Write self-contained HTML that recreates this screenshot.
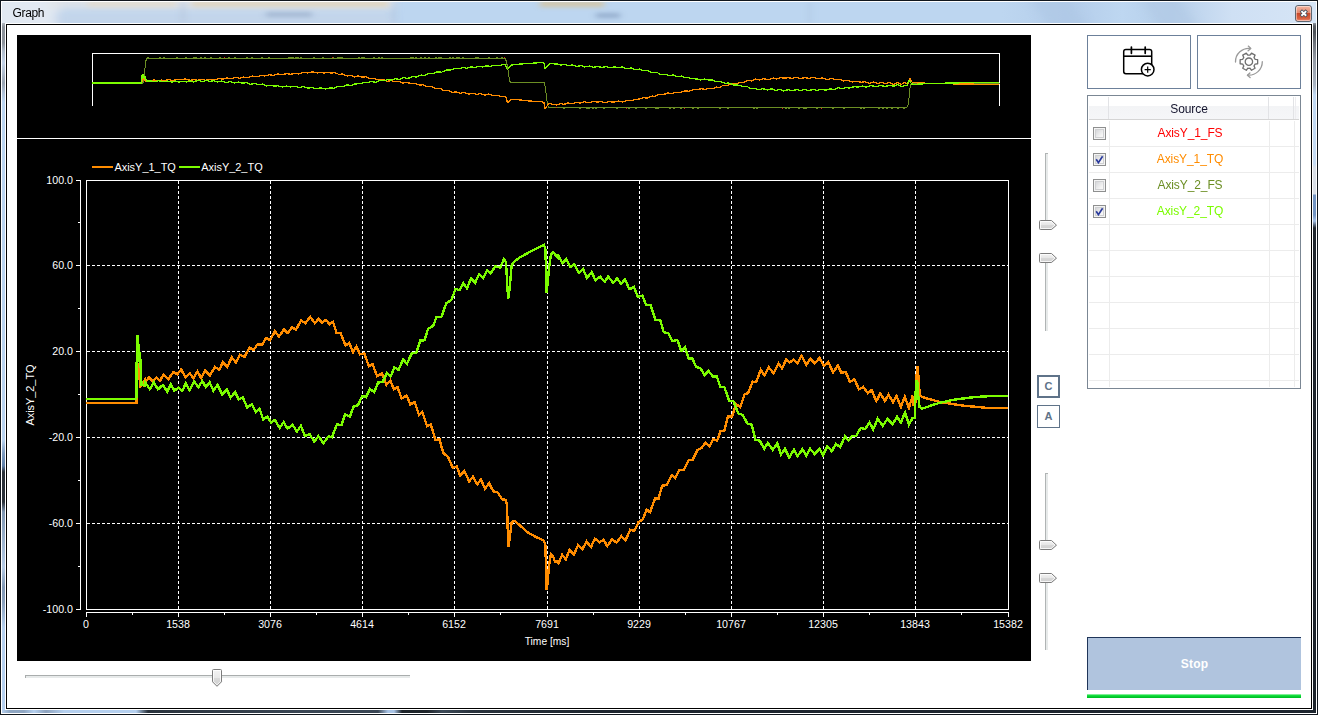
<!DOCTYPE html>
<html><head><meta charset="utf-8"><title>Graph</title>
<style>
html,body{margin:0;padding:0;}
body{width:1318px;height:715px;overflow:hidden;position:relative;background:#fff;font-family:"Liberation Sans",Arial,sans-serif;}
.abs{position:absolute;}
#frame{left:0;top:0;width:1318px;height:715px;background:#10161d;}
#titlebar{left:2px;top:2px;width:1314px;height:21px;
 background:
  linear-gradient(to right, #bdd6f0 0px, #bdd6f0 1000px, #b4cdea 1070px, #bed7f1 1120px, #b6cfea 1170px, #cfe0f4 1230px, #d6e5f6 1314px);}
#title{left:12.5px;top:4px;font-size:12px;line-height:18px;color:#000;letter-spacing:-0.35px;}
#client{left:7px;top:25px;width:1304px;height:683px;background:#fff;}
.btn{border:1px solid #6c809a;background:#fff;box-sizing:border-box;}
#grid{left:1087px;top:95px;width:214px;height:294px;border:1px solid #7b8794;box-sizing:border-box;background:#fff;}
.row{position:absolute;left:1px;width:210px;height:1px;background:#ececec;}
.col{position:absolute;top:25px;width:1px;height:266px;background:#ececec;}
.hsep{position:absolute;top:1px;width:1px;height:22px;background:#e2e3e6;}
.cb{position:absolute;left:5px;width:13px;height:13px;box-sizing:border-box;border:1px solid #8e8f8f;background:#f4f4f4;}
.cb i{position:absolute;left:1px;top:1px;width:9px;height:9px;box-sizing:border-box;border:1px solid #cfd0d2;background:linear-gradient(135deg,#d6d7da 0%,#f6f6f6 80%);}
.cell{position:absolute;left:22px;width:160px;text-align:center;font-size:12px;line-height:14px;height:14px;letter-spacing:-0.1px;}
.tv{position:absolute;width:3px;box-sizing:border-box;background:#e7eaea;border-left:1px solid #b0b4b4;border-top:1px solid #b0b4b4;}
</style></head>
<body>
<div id="frame" class="abs"></div>
<!-- glass borders -->
<div class="abs" style="left:1px;top:1px;width:1316px;height:713px;background:#fff;"></div>
<div class="abs" style="left:2px;top:2px;width:1314px;height:711px;background:#a9c3e0;"></div>
<div class="abs" id="leftglass" style="left:2px;top:2px;width:3px;height:711px;background:linear-gradient(to bottom,#dfe6ee 0,#d5dce5 17px,#8d939b 25px,#8d939b 41px,#b0bccb 49px,#c3d3e8 61px,#b0bdce 71px,#9aa5b3 81px,#b0c2d8 91px,#bcd6f2 100px,#b9d3f0 438px,#7f9cc0 451px,#5f7fa8 464px,#2a3038 470px,#2a3038 500px,#8097b3 510px,#9db4cf 540px,#b5cbe6 565px,#8299b6 585px,#8aa0bc 600px,#b5d0ef 625px,#b5d0ef 711px);"></div>
<div class="abs" id="rightglass" style="left:1313px;top:2px;width:3px;height:711px;background:linear-gradient(to bottom,#d6e5f6 0,#d0dff0 17px,#5a5f66 24px,#4d5258 30px,#70767e 42px,#949ba5 58px,#a9b4c2 83px,#c0d8f2 93px,#c5dbf3 162px,#d8dee6 166px,#d8dee6 192px,#7294c2 193px,#7294c2 213px,#a4c0e6 219px,#1f262e 226px,#1c232b 711px);"></div>
<div class="abs" id="bottomglass" style="left:2px;top:710px;width:1314px;height:3px;background:linear-gradient(to right,#b5d0ef 0,#8fa6c2 8px,#8fa6c2 22px,#b5d0ef 32px,#8da2bd 44px,#b5d0ef 62px,#b5d0ef 134px,#2a333d 146px,#3a4654 300px,#3a4654 376px,#a9c4e6 386px,#a9c4e6 392px,#1e242a 400px,#1e242a 425px,#3d4a58 440px,#2a333d 470px,#1d252e 600px,#1d252e 1314px);"></div>
<div id="titlebar" class="abs"></div>
<svg class="abs" style="left:2px;top:2px" width="1314" height="21" viewBox="2 2 1314 21">
<defs><filter id="bl" x="-20%" y="-200%" width="140%" height="500%"><feGaussianBlur stdDeviation="3 2"/></filter>
<filter id="bl2" x="-20%" y="-200%" width="140%" height="500%"><feGaussianBlur stdDeviation="5 3"/></filter></defs>
<g filter="url(#bl2)">
<rect x="-10" y="-4" width="70" height="34" fill="#e6ebf2" opacity=".9"/>
<rect x="50" y="-4" width="345" height="13" fill="#e2e4e8" opacity=".85"/>
<rect x="55" y="12" width="340" height="14" fill="#c4d5ea" opacity=".9"/>
<rect x="1040" y="-4" width="40" height="34" fill="#adc6e4" opacity=".6" transform="skewX(35) translate(-10,0)"/>
<rect x="1150" y="-4" width="40" height="34" fill="#b0c8e4" opacity=".5" transform="skewX(35) translate(-10,0)"/>
</g>
<g filter="url(#bl)">
<rect x="88" y="1" width="88" height="6" fill="#ead9bd" opacity=".55"/>
<rect x="192" y="1" width="196" height="6" fill="#e3cfa8" opacity=".6"/>
<rect x="540" y="1" width="64" height="6" fill="#dcc08c" opacity=".7"/>
<rect x="266" y="12" width="46" height="5" fill="#9db2cd" opacity=".8"/>
<rect x="596" y="13" width="24" height="5" fill="#8fa8c8" opacity=".85"/>
<rect x="182" y="2" width="2" height="21" fill="#aebfd6" opacity=".9"/>
<rect x="393" y="2" width="2" height="21" fill="#a9bfdb" opacity=".9"/>
<rect x="808" y="2" width="3" height="21" fill="#aec6e3" opacity=".8"/>
</g>
</svg>
<div id="title" class="abs">Graph</div>
<!-- close button -->
<svg class="abs" style="left:1294px;top:4px" width="19" height="19" viewBox="0 0 19 19">
<defs><linearGradient id="cg" x1="0" y1="0" x2="0" y2="1"><stop offset="0" stop-color="#f3b8a4"/><stop offset=".45" stop-color="#e48a70"/><stop offset=".5" stop-color="#c8492a"/><stop offset=".8" stop-color="#d9603f"/><stop offset="1" stop-color="#f0917a"/></linearGradient></defs>
<rect x="1.5" y="1.5" width="16" height="16" rx="2.5" fill="url(#cg)" stroke="#5d6670" stroke-width="1"/>
<rect x="2.5" y="2.5" width="14" height="14" rx="1.5" fill="none" stroke="#fff" stroke-opacity=".45"/>
<path d="M6.8 6.6L12.8 12.2M12.8 6.6L6.8 12.2" stroke="#46505e" stroke-width="3.4"/>
<path d="M7.4 7.1L12.2 11.7M12.2 7.1L7.4 11.7" stroke="#fff" stroke-width="1.9"/>
</svg>
<!-- client -->
<div class="abs" style="left:5px;top:23px;width:1308px;height:687px;background:#fff;"></div>
<div class="abs" style="left:6px;top:24px;width:1306px;height:685px;background:#000;"></div>
<div id="client" class="abs"></div>
<svg id="chart" width="1318" height="715" viewBox="0 0 1318 715" style="position:absolute;left:0;top:0">
<rect x="17" y="35" width="1014" height="626" fill="#000"/>
<g fill="#fff" shape-rendering="crispEdges">
<rect x="92" y="53" width="908" height="1"/><rect x="92" y="53" width="1" height="53"/><rect x="999" y="53" width="1" height="53"/>
<rect x="17" y="138" width="1014" height="1"/>
<rect x="86" y="180" width="923" height="1"/><rect x="86" y="609" width="923" height="1"/><rect x="86" y="180" width="1" height="430"/><rect x="1008" y="180" width="1" height="430"/>
<rect x="80" y="180" width="1" height="430"/><rect x="86" y="612" width="923" height="1"/>
<rect x="76" y="180" width="4" height="1"/>
<rect x="78" y="222" width="2" height="1"/>
<rect x="76" y="265" width="4" height="1"/>
<rect x="78" y="308" width="2" height="1"/>
<rect x="76" y="351" width="4" height="1"/>
<rect x="78" y="394" width="2" height="1"/>
<rect x="76" y="437" width="4" height="1"/>
<rect x="78" y="480" width="2" height="1"/>
<rect x="76" y="523" width="4" height="1"/>
<rect x="78" y="566" width="2" height="1"/>
<rect x="76" y="609" width="4" height="1"/>
<rect x="86" y="613" width="1" height="4"/>
<rect x="132" y="613" width="1" height="2"/>
<rect x="178" y="613" width="1" height="4"/>
<rect x="224" y="613" width="1" height="2"/>
<rect x="270" y="613" width="1" height="4"/>
<rect x="316" y="613" width="1" height="2"/>
<rect x="362" y="613" width="1" height="4"/>
<rect x="408" y="613" width="1" height="2"/>
<rect x="454" y="613" width="1" height="4"/>
<rect x="500" y="613" width="1" height="2"/>
<rect x="547" y="613" width="1" height="4"/>
<rect x="593" y="613" width="1" height="2"/>
<rect x="639" y="613" width="1" height="4"/>
<rect x="685" y="613" width="1" height="2"/>
<rect x="731" y="613" width="1" height="4"/>
<rect x="777" y="613" width="1" height="2"/>
<rect x="823" y="613" width="1" height="4"/>
<rect x="869" y="613" width="1" height="2"/>
<rect x="915" y="613" width="1" height="4"/>
<rect x="961" y="613" width="1" height="2"/>
<rect x="1008" y="613" width="1" height="4"/>
</g>
<g stroke="#fff" stroke-width="1" stroke-dasharray="3 2" shape-rendering="crispEdges">
<line x1="178.5" y1="181" x2="178.5" y2="609"/>
<line x1="270.5" y1="181" x2="270.5" y2="609"/>
<line x1="362.5" y1="181" x2="362.5" y2="609"/>
<line x1="454.5" y1="181" x2="454.5" y2="609"/>
<line x1="547.5" y1="181" x2="547.5" y2="609"/>
<line x1="639.5" y1="181" x2="639.5" y2="609"/>
<line x1="731.5" y1="181" x2="731.5" y2="609"/>
<line x1="823.5" y1="181" x2="823.5" y2="609"/>
<line x1="915.5" y1="181" x2="915.5" y2="609"/>
<line x1="87" y1="265.5" x2="1008" y2="265.5"/>
<line x1="87" y1="351.5" x2="1008" y2="351.5"/>
<line x1="87" y1="437.5" x2="1008" y2="437.5"/>
<line x1="87" y1="523.5" x2="1008" y2="523.5"/>
</g>
<g fill="none" stroke-width="1.3" stroke-linejoin="round" shape-rendering="crispEdges">
<polyline stroke="#6b8e23" stroke-width="1" points="92.5,83.5 142.5,83.5 144.0,80.5 145.5,62.5 146.5,58.5 147.5,58.5 147.5,57.5 148.5,57.5 148.5,58.5 159.5,58.5 159.5,57.5 160.5,57.5 160.5,58.5 163.5,58.5 163.5,57.5 164.5,57.5 164.5,58.5 176.5,58.5 176.5,57.5 177.5,57.5 177.5,58.5 185.5,58.5 185.5,57.5 186.5,57.5 186.5,58.5 193.5,58.5 193.5,57.5 194.5,57.5 194.5,58.5 195.5,58.5 195.5,57.5 196.5,57.5 196.5,58.5 200.5,58.5 200.5,57.5 201.5,57.5 201.5,58.5 204.5,58.5 204.5,57.5 205.5,57.5 205.5,58.5 210.5,58.5 210.5,57.5 211.5,57.5 211.5,58.5 219.5,58.5 219.5,57.5 220.5,57.5 220.5,58.5 228.5,58.5 228.5,57.5 229.5,57.5 229.5,58.5 234.5,58.5 234.5,57.5 235.5,57.5 235.5,58.5 246.5,58.5 246.5,57.5 247.5,57.5 247.5,58.5 251.5,58.5 251.5,57.5 252.5,57.5 252.5,58.5 261.5,58.5 261.5,57.5 262.5,57.5 262.5,58.5 268.5,58.5 268.5,57.5 269.5,57.5 269.5,58.5 288.5,58.5 288.5,57.5 289.5,57.5 289.5,58.5 290.5,58.5 290.5,57.5 291.5,57.5 291.5,58.5 292.5,58.5 292.5,57.5 293.5,57.5 293.5,58.5 295.5,58.5 295.5,57.5 296.5,57.5 296.5,58.5 297.5,58.5 297.5,57.5 298.5,57.5 298.5,58.5 300.5,58.5 300.5,57.5 301.5,57.5 301.5,58.5 313.5,58.5 313.5,57.5 314.5,57.5 314.5,58.5 322.5,58.5 322.5,57.5 323.5,57.5 323.5,58.5 332.5,58.5 332.5,57.5 333.5,57.5 333.5,58.5 337.5,58.5 337.5,57.5 338.5,57.5 338.5,58.5 339.5,58.5 339.5,57.5 340.5,57.5 340.5,58.5 341.5,58.5 341.5,57.5 342.5,57.5 342.5,58.5 358.5,58.5 358.5,57.5 359.5,57.5 359.5,58.5 361.5,58.5 361.5,57.5 362.5,57.5 362.5,58.5 363.5,58.5 363.5,57.5 364.5,57.5 364.5,58.5 373.5,58.5 373.5,57.5 374.5,57.5 374.5,58.5 378.5,58.5 378.5,57.5 379.5,57.5 379.5,58.5 381.5,58.5 381.5,57.5 382.5,57.5 382.5,58.5 410.5,58.5 410.5,57.5 411.5,57.5 411.5,58.5 412.5,58.5 412.5,57.5 413.5,57.5 413.5,58.5 415.5,58.5 415.5,57.5 416.5,57.5 416.5,58.5 420.5,58.5 420.5,57.5 421.5,57.5 421.5,58.5 424.5,58.5 424.5,57.5 425.5,57.5 425.5,58.5 428.5,58.5 428.5,57.5 429.5,57.5 429.5,58.5 435.5,58.5 435.5,57.5 436.5,57.5 436.5,58.5 438.5,58.5 438.5,57.5 439.5,57.5 439.5,58.5 440.5,58.5 440.5,57.5 441.5,57.5 441.5,58.5 449.5,58.5 449.5,57.5 450.5,57.5 450.5,58.5 452.5,58.5 452.5,57.5 453.5,57.5 453.5,58.5 456.5,58.5 456.5,57.5 457.5,57.5 457.5,58.5 458.5,58.5 458.5,57.5 459.5,57.5 459.5,58.5 462.5,58.5 462.5,57.5 463.5,57.5 463.5,58.5 475.5,58.5 475.5,57.5 476.5,57.5 476.5,58.5 477.5,58.5 477.5,57.5 478.5,57.5 478.5,58.5 488.5,58.5 488.5,57.5 489.5,57.5 489.5,58.5 496.5,58.5 496.5,57.5 497.5,57.5 497.5,58.5 501.5,58.5 501.5,57.5 502.5,57.5 502.5,58.5 505.5,58.5 507.5,66.5 509.5,80.5 510.5,82.5 544.5,82.5 546.0,92.5 547.5,104.5 548.5,107.5 563.5,107.5 563.5,108.5 564.5,108.5 564.5,107.5 579.5,107.5 579.5,108.5 580.5,108.5 580.5,107.5 586.5,107.5 586.5,108.5 587.5,108.5 587.5,107.5 588.5,107.5 588.5,108.5 589.5,108.5 589.5,107.5 592.5,107.5 592.5,108.5 593.5,108.5 593.5,107.5 595.5,107.5 595.5,108.5 596.5,108.5 596.5,107.5 603.5,107.5 603.5,108.5 604.5,108.5 604.5,107.5 616.5,107.5 616.5,108.5 617.5,108.5 617.5,107.5 628.5,107.5 628.5,108.5 629.5,108.5 629.5,107.5 635.5,107.5 635.5,108.5 636.5,108.5 636.5,107.5 645.5,107.5 645.5,108.5 646.5,108.5 646.5,107.5 655.5,107.5 655.5,108.5 656.5,108.5 656.5,107.5 657.5,107.5 657.5,108.5 658.5,108.5 658.5,107.5 669.5,107.5 669.5,108.5 670.5,108.5 670.5,107.5 673.5,107.5 673.5,108.5 674.5,108.5 674.5,107.5 680.5,107.5 680.5,108.5 681.5,108.5 681.5,107.5 692.5,107.5 692.5,108.5 693.5,108.5 693.5,107.5 697.5,107.5 697.5,108.5 698.5,108.5 698.5,107.5 719.5,107.5 719.5,108.5 720.5,108.5 720.5,107.5 727.5,107.5 727.5,108.5 728.5,108.5 728.5,107.5 753.5,107.5 753.5,108.5 754.5,108.5 754.5,107.5 756.5,107.5 756.5,108.5 757.5,108.5 757.5,107.5 785.5,107.5 785.5,108.5 786.5,108.5 786.5,107.5 788.5,107.5 788.5,108.5 789.5,108.5 789.5,107.5 798.5,107.5 798.5,108.5 799.5,108.5 799.5,107.5 803.5,107.5 803.5,108.5 804.5,108.5 804.5,107.5 805.5,107.5 805.5,108.5 806.5,108.5 806.5,107.5 816.5,107.5 816.5,108.5 817.5,108.5 817.5,107.5 832.5,107.5 832.5,108.5 833.5,108.5 833.5,107.5 843.5,107.5 843.5,108.5 844.5,108.5 844.5,107.5 860.5,107.5 860.5,108.5 861.5,108.5 861.5,107.5 863.5,107.5 863.5,108.5 864.5,108.5 864.5,107.5 878.5,107.5 878.5,108.5 879.5,108.5 879.5,107.5 882.5,107.5 882.5,108.5 883.5,108.5 883.5,107.5 886.5,107.5 886.5,108.5 887.5,108.5 887.5,107.5 891.5,107.5 891.5,108.5 892.5,108.5 892.5,107.5 897.5,107.5 897.5,108.5 898.5,108.5 898.5,107.5 903.5,107.5 903.5,108.5 904.5,108.5 904.5,107.5 906.5,107.5 908.5,104.5 909.5,92.5 910.5,84.5 911.5,83.5 999.5,83.5"/>
<polyline stroke="#ff8c00" points="92.0,83.5 141.6,83.5 142.2,81.1 143.4,78.3 144.3,79.4 145.6,81.3 147.1,81.0 149.5,80.5 149.5,81.0 153.9,80.0 157.8,80.8 161.2,80.1 164.7,80.7 168.3,79.6 173.1,80.5 178.0,79.3 181.8,79.7 185.6,78.9 189.9,80.3 194.1,79.6 197.7,80.4 201.6,79.2 205.4,80.4 209.1,79.1 213.9,80.0 218.7,78.6 223.3,79.2 226.7,77.9 230.9,78.9 235.4,77.3 239.4,78.3 243.5,77.1 248.0,77.5 252.6,76.1 257.0,76.6 260.6,75.7 265.2,75.9 269.1,74.8 273.2,75.3 277.8,73.8 281.8,74.8 286.7,73.6 290.4,74.3 294.6,73.4 298.7,73.9 303.5,72.4 307.8,73.0 312.6,71.9 317.2,73.0 320.7,72.3 324.1,73.0 328.0,72.4 331.6,73.1 335.0,72.6 338.6,74.3 342.5,74.1 347.4,76.0 350.9,75.5 354.6,76.9 358.0,75.9 361.6,77.1 365.8,76.8 370.2,78.7 373.8,78.2 378.4,80.1 383.0,79.4 387.6,81.3 391.3,80.4 394.7,81.8 398.5,81.3 402.5,83.1 407.4,82.4 411.1,83.8 415.4,83.3 419.5,85.2 423.0,84.6 427.5,86.8 431.2,86.2 435.8,88.6 439.7,88.2 443.4,90.3 448.1,90.6 452.8,92.3 456.7,91.9 460.0,93.3 464.2,92.4 468.9,94.1 472.7,93.2 476.9,94.5 480.5,93.5 484.5,95.1 488.5,94.1 492.7,95.4 496.8,95.4 501.4,96.4 505.2,96.4 505.2,96.4 506.1,97.2 507.4,102.7 508.6,101.8 510.8,99.4 514.0,99.2 518.9,99.8 527.3,100.8 534.7,101.4 542.5,101.8 544.0,102.6 544.9,108.4 546.0,107.6 547.5,105.2 549.3,103.6 551.4,103.9 553.4,104.7 556.3,104.5 556.3,105.1 560.5,103.6 564.0,104.4 567.8,102.9 572.0,103.8 576.0,102.3 580.2,103.2 584.4,101.8 588.8,102.9 592.6,101.4 597.2,102.1 601.3,101.6 604.7,102.7 609.5,101.6 613.9,102.2 618.7,101.1 622.7,101.9 627.4,100.3 631.5,100.6 635.4,99.3 639.6,99.1 643.4,97.6 646.9,98.2 651.8,96.1 655.2,96.4 658.7,94.4 663.4,94.5 668.1,93.0 671.6,93.6 675.6,92.3 680.0,92.5 684.7,91.0 688.7,91.2 693.5,89.8 697.7,89.5 701.3,88.7 705.2,89.4 709.0,88.2 712.8,88.6 716.2,87.1 719.9,87.3 723.4,85.2 727.5,85.5 731.6,83.5 735.5,84.2 739.9,82.2 743.3,82.3 747.8,80.6 751.3,80.9 755.7,79.0 759.5,80.0 763.5,78.6 768.4,79.8 773.3,78.1 776.6,79.1 780.8,77.6 784.1,78.2 788.1,77.7 791.9,78.4 796.1,77.1 800.6,78.7 804.4,77.6 808.9,78.3 813.6,77.4 818.1,78.7 822.2,77.9 826.8,79.7 831.6,78.4 835.3,79.6 839.2,79.3 843.4,80.9 847.8,80.3 852.4,81.9 856.6,81.3 861.1,82.3 864.9,81.6 869.4,83.5 873.4,82.1 877.9,83.4 881.4,82.3 885.9,83.6 889.2,82.5 893.7,84.3 897.5,82.5 901.5,84.3 905.2,82.2 906.0,83.7 906.0,83.7 907.9,83.4 908.7,81.1 909.5,78.7 910.3,78.7 911.2,81.1 912.6,82.6 917.3,82.9 921.3,83.0 933.6,83.5 955.7,83.9 977.3,84.2 999.0,84.2"/>
<polyline stroke="#7cfc00" points="92.0,83.0 141.5,83.0 142.2,74.6 143.2,74.6 144.1,78.1 145.1,76.7 146.6,81.1 150.0,81.2 150.0,80.7 154.9,81.8 158.6,80.6 162.8,81.8 167.7,81.0 171.8,82.2 175.5,80.9 178.9,82.0 183.0,81.5 186.9,82.0 190.2,80.8 193.7,82.0 198.5,80.5 202.5,81.6 206.4,80.5 209.8,81.5 213.6,80.6 217.4,82.0 221.3,81.0 225.9,82.5 230.7,81.6 234.2,83.0 238.7,82.0 242.1,83.1 246.2,82.7 250.7,84.3 255.1,83.5 259.1,84.9 262.7,84.1 266.4,85.9 270.5,85.2 274.0,86.2 277.7,85.7 282.4,87.0 286.4,86.0 290.3,87.0 295.2,86.3 299.5,87.5 303.3,86.5 307.3,88.1 312.0,87.7 316.5,88.8 320.8,87.9 325.6,89.0 330.4,87.9 334.0,88.2 338.9,86.2 343.4,86.6 346.8,84.9 351.6,85.5 355.1,83.9 359.6,83.8 363.8,82.5 367.5,82.8 371.3,81.5 375.6,82.3 379.3,80.7 383.8,80.8 387.9,79.4 391.7,80.1 395.4,78.7 399.4,79.3 404.0,77.6 407.7,78.5 412.3,76.8 416.8,76.9 421.0,75.1 425.0,75.3 428.5,73.5 433.4,73.3 436.8,72.0 441.6,72.2 446.4,70.1 451.2,69.9 455.6,68.3 459.5,68.6 463.3,67.5 466.8,68.4 470.7,66.8 474.7,67.6 478.7,66.3 482.6,67.0 486.6,65.8 490.0,66.3 494.8,65.2 499.5,65.6 503.1,64.4 503.1,64.4 505.2,64.8 506.6,68.5 507.4,69.6 508.6,68.5 510.8,65.2 514.0,64.6 518.4,64.2 529.5,63.4 542.5,62.5 544.0,63.2 544.9,68.9 546.0,67.8 547.5,65.6 549.3,63.8 551.4,63.4 556.3,64.2 556.3,63.7 560.8,65.1 564.1,64.2 568.5,65.5 572.2,65.0 577.0,66.4 581.1,65.6 584.7,67.0 589.3,66.0 593.2,67.3 597.8,66.6 602.3,67.4 605.7,66.6 610.6,67.7 614.3,66.9 618.5,67.8 622.2,67.0 626.6,68.6 631.0,68.0 634.8,69.5 639.3,69.1 643.0,70.6 647.3,70.4 652.2,72.6 656.8,72.4 660.3,74.2 665.0,74.2 668.8,75.4 673.7,75.0 677.6,76.8 681.3,76.0 684.8,77.8 688.5,77.5 692.2,78.8 696.6,78.9 700.4,80.0 704.3,79.1 708.5,80.0 712.4,79.9 715.9,81.5 719.9,81.3 724.8,83.3 728.7,83.1 733.6,85.0 738.1,85.1 742.8,86.4 746.8,86.2 750.4,88.5 754.8,88.5 759.1,89.8 762.7,88.7 767.5,89.9 772.1,88.7 775.6,90.6 779.7,89.5 783.7,91.0 788.3,89.6 792.0,90.7 796.7,89.6 800.6,90.7 804.2,89.5 808.9,90.5 813.5,89.5 817.0,90.6 821.3,89.2 825.6,90.1 829.7,88.9 834.0,89.5 838.5,87.8 842.1,88.6 845.7,87.8 849.7,87.9 854.1,86.7 858.6,87.0 862.8,86.0 866.3,87.2 870.8,85.4 875.7,86.7 880.5,85.5 885.3,86.5 889.9,85.2 893.6,86.2 897.8,84.5 901.5,86.7 904.8,85.6 904.8,85.6 907.2,85.5 908.0,82.5 908.7,80.6 909.7,80.6 910.6,82.5 912.0,84.1 914.4,84.3 919.3,84.1 926.2,83.7 933.6,83.5 946.8,83.1 966.5,82.7 983.2,82.6 999.0,82.6"/>
</g>
<g fill="#e02020"><rect x="224" y="57" width="1" height="1"/><rect x="332" y="57" width="1" height="1"/><rect x="504" y="57" width="1" height="1"/><rect x="556" y="107" width="1" height="1"/><rect x="626" y="108" width="1" height="1"/><rect x="684" y="108" width="1" height="1"/><rect x="782" y="108" width="1" height="1"/><rect x="821" y="108" width="1" height="1"/></g>
<g fill="none" stroke-width="2.4" stroke-linejoin="miter" shape-rendering="crispEdges">
<polyline stroke="#ff8c00" points="86.0,403.0 136.4,403.0 137.0,385.0 138.3,363.5 139.2,372.0 140.5,386.0 142.0,384.0 144.5,380.5 144.5,383.3 148.9,377.4 152.9,381.5 156.4,377.4 159.9,381.1 163.5,374.4 168.4,379.0 173.4,372.0 177.3,374.2 181.2,369.5 185.5,377.4 189.8,373.5 193.5,378.4 197.4,371.4 201.3,378.2 205.1,370.6 209.9,375.4 214.8,367.0 219.5,369.8 222.9,361.9 227.2,367.1 231.7,357.4 235.9,362.5 240.0,354.7 244.6,356.9 249.3,347.7 253.7,350.0 257.4,344.4 262.0,344.8 266.1,338.0 270.2,340.2 274.9,331.2 279.0,336.6 283.9,329.3 287.7,333.0 292.0,327.4 296.1,329.5 301.0,320.5 305.4,323.2 310.2,316.9 314.9,323.3 318.5,318.7 322.0,323.0 325.9,319.8 329.6,324.1 333.0,321.9 336.6,333.0 340.6,333.2 345.6,345.6 349.2,343.0 353.0,352.1 356.4,346.5 360.0,354.3 364.3,353.4 368.8,366.2 372.5,364.1 377.1,376.1 381.8,373.5 386.5,384.8 390.3,380.5 393.7,389.2 397.5,387.0 401.6,398.5 406.6,395.6 410.3,404.3 414.7,402.1 418.9,414.8 422.4,412.1 427.1,426.1 430.8,424.3 435.5,440.2 439.5,439.0 443.2,453.0 448.0,456.8 452.7,467.8 456.7,466.5 460.1,475.4 464.4,471.0 469.2,481.4 473.0,476.7 477.3,484.4 480.9,479.4 485.0,488.8 489.1,483.3 493.4,491.5 497.5,492.2 502.2,499.3 506.0,500.0 506.0,500.0 507.0,506.0 508.3,547.0 509.5,540.0 511.7,522.0 515.0,521.0 520.0,525.5 528.5,533.0 536.0,537.0 544.0,540.7 545.5,546.0 546.4,590.0 547.5,584.0 549.0,566.0 550.9,554.0 553.0,556.0 555.0,562.0 558.0,561.0 558.0,564.3 562.2,554.9 565.8,559.3 569.6,549.7 573.9,554.6 578.1,545.0 582.3,549.5 586.5,541.4 591.0,547.1 594.9,538.6 599.6,542.3 603.7,539.7 607.2,546.2 612.1,539.3 616.5,542.7 621.5,536.2 625.5,540.4 630.2,529.8 634.5,530.8 638.4,522.3 642.7,519.5 646.6,509.5 650.1,512.3 655.0,498.4 658.5,498.7 662.1,485.8 666.8,484.9 671.7,475.4 675.2,478.0 679.3,469.8 683.7,469.9 688.5,460.2 692.6,460.0 697.5,450.2 701.8,447.7 705.4,442.7 709.3,446.6 713.2,438.8 717.1,440.7 720.6,431.0 724.3,430.5 727.8,416.6 732.0,416.7 736.2,404.2 740.2,407.2 744.6,394.3 748.1,393.1 752.7,381.7 756.2,382.1 760.7,369.8 764.5,375.3 768.7,367.2 773.6,373.5 778.6,363.5 782.0,368.5 786.2,359.4 789.6,362.7 793.6,359.5 797.5,363.2 801.7,355.7 806.3,365.1 810.2,358.7 814.8,363.2 819.5,358.1 824.1,366.1 828.3,362.1 833.0,372.4 837.8,365.7 841.6,373.0 845.6,371.8 849.9,381.7 854.4,379.4 859.0,389.3 863.3,386.9 867.9,393.3 871.7,390.0 876.3,401.2 880.3,393.5 884.9,401.1 888.5,394.5 893.0,402.2 896.5,396.1 900.9,406.9 904.8,396.8 908.9,407.8 912.7,395.7 913.5,404.0 913.5,404.0 915.4,402.0 916.2,385.0 917.0,367.0 917.9,367.0 918.8,385.0 920.2,396.0 925.0,398.0 929.0,399.0 941.5,402.4 964.0,405.7 986.0,407.8 1008.0,408.0"/>
<polyline stroke="#7cfc00" points="86.0,399.0 136.3,399.0 137.0,336.0 138.0,336.0 139.0,362.0 140.0,352.0 141.5,385.0 145.0,385.5 145.0,382.4 149.9,389.1 153.7,382.3 158.0,389.3 162.9,384.9 167.2,391.8 170.9,384.2 174.4,390.8 178.5,387.8 182.4,390.7 185.8,383.3 189.4,390.2 194.3,381.4 198.3,387.4 202.3,380.9 205.8,387.2 209.6,382.1 213.4,390.8 217.4,384.9 222.1,394.3 227.0,389.4 230.5,397.7 235.1,392.3 238.6,399.2 242.8,397.6 247.3,407.8 251.8,404.0 255.8,412.2 259.6,408.6 263.3,419.7 267.4,416.5 271.0,422.5 274.8,419.9 279.6,427.9 283.6,422.3 287.6,428.7 292.5,424.6 296.9,431.5 300.8,425.9 304.9,435.8 309.7,434.4 314.2,441.5 318.5,436.2 323.4,443.3 328.4,436.5 332.0,437.2 336.9,424.4 341.6,425.0 345.0,414.5 349.9,416.7 353.5,406.6 358.0,405.1 362.3,396.0 366.0,397.2 369.9,389.0 374.3,392.3 378.1,382.5 382.6,382.0 386.8,373.2 390.6,376.5 394.4,367.3 398.5,370.0 403.2,359.2 406.9,364.0 411.6,353.5 416.2,352.7 420.4,340.6 424.5,340.3 428.1,328.8 433.1,325.9 436.6,317.0 441.4,316.9 446.3,303.2 451.2,300.2 455.6,289.0 459.6,290.1 463.4,283.3 467.0,288.2 471.0,278.5 475.1,282.8 479.1,274.4 483.0,278.0 487.1,270.5 490.6,273.5 495.4,266.2 500.3,267.5 503.9,259.0 503.9,259.0 506.0,262.0 507.5,290.0 508.3,298.5 509.5,290.0 511.7,265.0 515.0,261.0 519.5,257.5 530.7,251.5 544.0,244.8 545.5,250.0 546.4,293.0 547.5,285.0 549.0,268.0 550.9,254.8 553.0,252.0 558.0,258.0 558.0,254.6 562.5,263.5 566.0,258.9 570.4,266.9 574.1,264.3 579.1,273.1 583.2,269.0 586.8,277.9 591.6,272.1 595.5,280.3 600.1,276.7 604.7,281.6 608.2,276.5 613.2,283.0 617.0,278.4 621.2,283.8 625.0,279.4 629.4,289.2 633.9,287.1 637.8,296.7 642.4,295.6 646.1,305.1 650.5,305.1 655.5,319.9 660.2,320.2 663.7,332.1 668.5,333.5 672.3,341.1 677.3,339.9 681.3,351.0 685.1,347.5 688.7,358.6 692.4,358.3 696.1,366.9 700.6,368.5 704.5,375.0 708.4,370.8 712.7,376.3 716.7,376.3 720.3,386.7 724.3,387.1 729.2,400.7 733.2,400.8 738.2,413.4 742.8,415.0 747.6,423.9 751.7,424.6 755.3,439.6 759.8,440.8 764.2,448.9 767.8,442.7 772.7,449.8 777.4,443.2 781.0,454.6 785.1,448.6 789.1,457.8 793.9,449.7 797.6,456.1 802.4,449.2 806.4,455.9 810.0,448.6 814.8,454.3 819.4,448.6 823.0,455.2 827.4,446.4 831.8,451.2 835.9,443.9 840.3,447.0 844.9,436.4 848.6,440.6 852.2,435.8 856.3,435.7 860.7,428.0 865.3,428.9 869.6,422.4 873.2,429.5 877.7,418.7 882.7,425.8 887.6,418.7 892.5,424.3 897.1,416.8 900.9,422.5 905.1,412.4 908.9,424.8 912.3,418.4 912.3,418.4 914.7,418.0 915.5,395.0 916.2,381.0 917.2,381.0 918.2,395.0 919.6,407.0 922.0,408.7 927.0,407.0 934.0,404.5 941.5,402.4 955.0,399.5 975.0,397.0 992.0,396.0 1008.0,396.0"/>
</g>
<g shape-rendering="crispEdges"><rect x="92" y="166" width="21" height="2" fill="#ff8c00"/><rect x="179" y="166" width="21" height="2" fill="#7cfc00"/></g>
<g fill="#fff" font-family="'Liberation Sans', Arial, sans-serif" font-size="10.67px">
<text x="114.4" y="170.6" textLength="61.5" lengthAdjust="spacingAndGlyphs">AxisY_1_TQ</text>
<text x="201.2" y="170.6" textLength="61.5" lengthAdjust="spacingAndGlyphs">AxisY_2_TQ</text>
<text x="73" y="184.0" text-anchor="end">100.0</text>
<text x="73" y="269.0" text-anchor="end">60.0</text>
<text x="73" y="355.0" text-anchor="end">20.0</text>
<text x="73" y="441.0" text-anchor="end">-20.0</text>
<text x="73" y="527.0" text-anchor="end">-60.0</text>
<text x="73" y="613.0" text-anchor="end">-100.0</text>
<text x="86.0" y="628.2" text-anchor="middle">0</text>
<text x="178.0" y="628.2" text-anchor="middle">1538</text>
<text x="270.0" y="628.2" text-anchor="middle">3076</text>
<text x="362.0" y="628.2" text-anchor="middle">4614</text>
<text x="454.0" y="628.2" text-anchor="middle">6152</text>
<text x="547.0" y="628.2" text-anchor="middle">7691</text>
<text x="639.0" y="628.2" text-anchor="middle">9229</text>
<text x="731.0" y="628.2" text-anchor="middle">10767</text>
<text x="823.0" y="628.2" text-anchor="middle">12305</text>
<text x="915.0" y="628.2" text-anchor="middle">13843</text>
<text x="1008.0" y="628.2" text-anchor="middle">15382</text>
<text x="547" y="644.8" text-anchor="middle" textLength="44.6" lengthAdjust="spacingAndGlyphs">Time [ms]</text>
<text transform="translate(34.2,395) rotate(-90)" text-anchor="middle" textLength="61" lengthAdjust="spacingAndGlyphs">AxisY_2_TQ</text>
</g>
</svg>
<!-- right vertical sliders -->
<div class="tv" style="left:1045px;top:153px;height:68px;"></div>
<div class="tv" style="left:1045px;top:262px;height:69px;"></div>
<div class="tv" style="left:1045px;top:473px;height:68px;"></div>
<div class="tv" style="left:1045px;top:582px;height:68px;"></div>
<svg class="abs" style="left:1039px;top:220px" width="19" height="11" viewBox="0 0 19 11"><defs><linearGradient id="tg1" x1="0" y1="0" x2="0" y2="1"><stop offset="0" stop-color="#f4f4f4"/><stop offset=".5" stop-color="#e6e6e6"/><stop offset=".5" stop-color="#d9d9d9"/><stop offset="1" stop-color="#cfcfcf"/></linearGradient></defs><path d="M1.5 .5H12.5L17.5 5.2L12.5 9.5H1.5Q.5 9.5 .5 8.5V1.5Q.5 .5 1.5 .5Z" fill="url(#tg1)" stroke="#7c7c7c" stroke-width="1"/><path d="M1.5 1.5H12.2L16 5.1L12.2 8.5H1.5Z" fill="none" stroke="#fff" stroke-opacity=".8" stroke-width="1"/></svg><svg class="abs" style="left:1039px;top:253px" width="19" height="11" viewBox="0 0 19 11"><defs><linearGradient id="tg2" x1="0" y1="0" x2="0" y2="1"><stop offset="0" stop-color="#f4f4f4"/><stop offset=".5" stop-color="#e6e6e6"/><stop offset=".5" stop-color="#d9d9d9"/><stop offset="1" stop-color="#cfcfcf"/></linearGradient></defs><path d="M1.5 .5H12.5L17.5 5.2L12.5 9.5H1.5Q.5 9.5 .5 8.5V1.5Q.5 .5 1.5 .5Z" fill="url(#tg2)" stroke="#7c7c7c" stroke-width="1"/><path d="M1.5 1.5H12.2L16 5.1L12.2 8.5H1.5Z" fill="none" stroke="#fff" stroke-opacity=".8" stroke-width="1"/></svg><svg class="abs" style="left:1039px;top:540px" width="19" height="11" viewBox="0 0 19 11"><defs><linearGradient id="tg3" x1="0" y1="0" x2="0" y2="1"><stop offset="0" stop-color="#f4f4f4"/><stop offset=".5" stop-color="#e6e6e6"/><stop offset=".5" stop-color="#d9d9d9"/><stop offset="1" stop-color="#cfcfcf"/></linearGradient></defs><path d="M1.5 .5H12.5L17.5 5.2L12.5 9.5H1.5Q.5 9.5 .5 8.5V1.5Q.5 .5 1.5 .5Z" fill="url(#tg3)" stroke="#7c7c7c" stroke-width="1"/><path d="M1.5 1.5H12.2L16 5.1L12.2 8.5H1.5Z" fill="none" stroke="#fff" stroke-opacity=".8" stroke-width="1"/></svg><svg class="abs" style="left:1039px;top:573px" width="19" height="11" viewBox="0 0 19 11"><defs><linearGradient id="tg4" x1="0" y1="0" x2="0" y2="1"><stop offset="0" stop-color="#f4f4f4"/><stop offset=".5" stop-color="#e6e6e6"/><stop offset=".5" stop-color="#d9d9d9"/><stop offset="1" stop-color="#cfcfcf"/></linearGradient></defs><path d="M1.5 .5H12.5L17.5 5.2L12.5 9.5H1.5Q.5 9.5 .5 8.5V1.5Q.5 .5 1.5 .5Z" fill="url(#tg4)" stroke="#7c7c7c" stroke-width="1"/><path d="M1.5 1.5H12.2L16 5.1L12.2 8.5H1.5Z" fill="none" stroke="#fff" stroke-opacity=".8" stroke-width="1"/></svg>
<!-- C / A buttons -->
<div class="abs" style="left:1037px;top:375px;width:23px;height:23px;box-sizing:border-box;border:2px solid #5f7389;background:#fff;color:#5f7389;font-weight:bold;font-size:11px;line-height:19px;text-align:center;">C</div>
<div class="abs" style="left:1037px;top:405px;width:23px;height:23px;box-sizing:border-box;border:1px solid #5f7389;background:#fff;color:#5f7389;font-weight:bold;font-size:11px;line-height:21px;text-align:center;">A</div>
<!-- bottom slider -->
<div class="abs" style="left:25px;top:675px;width:385px;height:3px;background:#e7eaea;border-top:1px solid #a9adad;box-sizing:border-box;border-left:1px solid #a9adad;"></div>
<svg class="abs" style="left:212px;top:669px" width="11" height="19" viewBox="0 0 11 19"><defs><linearGradient id="tgd" x1="0" y1="0" x2="0" y2="1"><stop offset="0" stop-color="#f4f4f4"/><stop offset=".5" stop-color="#e8e8e8"/><stop offset=".5" stop-color="#dadada"/><stop offset="1" stop-color="#cfcfcf"/></linearGradient></defs><path d="M.5 1.5Q.5 .5 1.5 .5H8.5Q9.5 .5 9.5 1.5V12.8L5 17.3L.5 12.8Z" fill="url(#tgd)" stroke="#7c7c7c" stroke-width="1"/><path d="M1.5 1.5H8.5V12.4L5 15.9L1.5 12.4Z" fill="none" stroke="#fff" stroke-opacity=".8"/></svg>
<!-- top right buttons -->
<div class="abs btn" style="left:1087px;top:35px;width:104px;height:54px;"></div>
<div class="abs btn" style="left:1197px;top:35px;width:104px;height:54px;"></div>
<svg class="abs" style="left:1115px;top:42px" width="48" height="40" viewBox="1115 42 48 40" fill="none" stroke="#000" stroke-width="1.5">
<rect x="1123.7" y="49.4" width="28" height="24.3" rx="2.2"/>
<path d="M1123.7 56.2H1151.7" stroke-width="1.6"/>
<path d="M1131.4 47V53.3M1145.2 47V53.3" stroke-linecap="round" stroke-width="1.7"/>
<circle cx="1147.7" cy="69.6" r="6.3" fill="#fff"/>
<path d="M1144.6 69.6H1150.8M1147.7 66.5V72.7" stroke-width="1.2"/>
</svg>
<svg class="abs" style="left:1229px;top:42px" width="40" height="40" viewBox="-20 -20 40 40" fill="none" stroke="#707070" stroke-width="1.3" stroke-linejoin="round" stroke-linecap="round">
<g transform="translate(-0.1,-0.3)">
<path d="M6.18 -2.33L8.76 -2.05L8.76 2.05L6.18 2.33A6.6 6.6 0 0 1 5.10 4.19L6.16 6.56L2.60 8.61L1.07 6.51A6.6 6.6 0 0 1 -1.07 6.51L-2.60 8.61L-6.16 6.56L-5.10 4.19A6.6 6.6 0 0 1 -6.18 2.33L-8.76 2.05L-8.76 -2.05L-6.18 -2.33A6.6 6.6 0 0 1 -5.10 -4.19L-6.16 -6.56L-2.60 -8.61L-1.07 -6.51A6.6 6.6 0 0 1 1.07 -6.51L2.60 -8.61L6.16 -6.56L5.10 -4.19A6.6 6.6 0 0 1 6.18 -2.33Z"/>
<circle r="3.7"/>
<g stroke="#9a9a9a">
<path d="M-13.4 0.4A13.4 13.4 0 0 1 1.6 -13.3"/><path d="M-0.6 -15.6L1.9 -13.3L-0.8 -10.9"/>
<path d="M13.4 0A13.4 13.4 0 0 1 -1.2 13.4"/><path d="M1 11.2L-1.5 13.5L1.2 15.8"/>
</g></g>
</svg>
<!-- grid -->
<div id="grid" class="abs">
 <div class="abs" style="left:1px;top:1px;width:210px;height:23px;background:linear-gradient(to bottom,#fff 0,#fff 42%,#f3f4f6 43%,#f5f6f8 100%);border-bottom:1px solid #d5d5d5;box-sizing:border-box;"></div>
 <div class="hsep" style="left:20px"></div><div class="hsep" style="left:180px"></div><div class="hsep" style="left:205px"></div><div class="hsep" style="left:207px;background:#ededf0"></div>
 <div class="abs" style="left:21px;top:6px;width:160px;text-align:center;font-size:12px;line-height:14px;color:#15152e;letter-spacing:-0.1px;">Source</div>
 <div class="row" style="top:50px"></div><div class="row" style="top:76px"></div><div class="row" style="top:102px"></div><div class="row" style="top:128px"></div><div class="row" style="top:154px"></div><div class="row" style="top:180px"></div><div class="row" style="top:206px"></div><div class="row" style="top:232px"></div><div class="row" style="top:258px"></div><div class="row" style="top:284px"></div>
 <div class="col" style="left:21px"></div><div class="col" style="left:181px"></div><div class="col" style="left:206px"></div>
 <div class="cb" style="top:31px"><i></i></div><div class="cell" style="top:30px;color:#ff0000">AxisY_1_FS</div><div class="cb" style="top:57px"><i></i><svg class="abs" style="left:1px;top:1px" width="9" height="9" viewBox="0 0 9 9"><path d="M1.2 4.2L3.4 7.6L7.6 1.2" fill="none" stroke="#2a3a9c" stroke-width="1.7"/></svg></div><div class="cell" style="top:56px;color:#ff8c00">AxisY_1_TQ</div><div class="cb" style="top:83px"><i></i></div><div class="cell" style="top:82px;color:#6b8e23">AxisY_2_FS</div><div class="cb" style="top:109px"><i></i><svg class="abs" style="left:1px;top:1px" width="9" height="9" viewBox="0 0 9 9"><path d="M1.2 4.2L3.4 7.6L7.6 1.2" fill="none" stroke="#2a3a9c" stroke-width="1.7"/></svg></div><div class="cell" style="top:108px;color:#7cfc00">AxisY_2_TQ</div>
</div>
<!-- stop button -->
<div class="abs" style="left:1087px;top:637px;width:214px;height:53px;box-sizing:border-box;background:#b0c4de;border-top:1px solid #1f3559;border-left:1px solid #1f3559;color:#fff;font-weight:bold;font-size:12px;line-height:52px;text-align:center;letter-spacing:0.2px;">Stop</div>
<div class="abs" style="left:1087px;top:694px;width:214px;height:4px;background:linear-gradient(to bottom,#b9f5c4 0,#18e040 35%,#00cc2a 70%,#00b824 100%);"></div>
</body></html>
